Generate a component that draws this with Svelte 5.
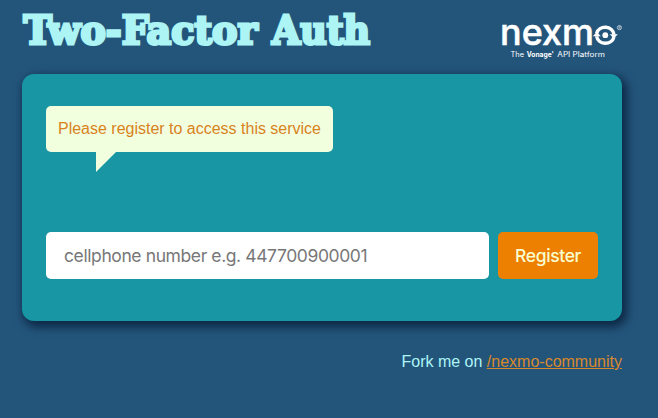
<script>
  let phone = $state('');
</script>

<main>
  <header>
    <h1>
      <svg width="356" height="60" viewBox="0 0 356 60">
        <g class="title">
          <text x="1.5" y="44" textLength="234" lengthAdjust="spacingAndGlyphs">Two-Factor</text>
          <text x="250" y="44" textLength="98" lengthAdjust="spacingAndGlyphs">Auth</text>
        </g>
      </svg>
    </h1>
    <svg class="logo" width="123" height="42" viewBox="500 20 123 42" aria-label="Nexmo">
      <g class="word">
        <text x="500" y="44.9" textLength="94" lengthAdjust="spacingAndGlyphs">nexm</text>
      </g>
      <g fill="none" stroke="#fff" stroke-width="3.4">
        <path d="M596.6 33.4 A8.9 8.4 0 0 1 614 34.6" />
        <path d="M614 37 A8.9 8.4 0 0 1 596.6 36.2" />
      </g>
      <path fill="#fff" d="M609.8 34.2 H617.8 L613.8 38.4Z M592.8 36.2 L596.8 32 L600.8 36.2Z" />
      <circle cx="605.3" cy="35.2" r="2.9" fill="#fff" />
      <circle cx="619.4" cy="27.6" r="2.1" fill="none" stroke="#fff" stroke-width=".6" />
      <text class="reg" x="618.4" y="28.8">R</text>
      <g class="tagline">
        <text x="510.5" y="56.6" textLength="13.5" lengthAdjust="spacingAndGlyphs">The</text>
        <text class="strong" x="526.8" y="56.6" textLength="27" lengthAdjust="spacingAndGlyphs">Vonage'</text>
        <text x="557.3" y="56.6" textLength="47.5" lengthAdjust="spacingAndGlyphs">API Platform</text>
      </g>
    </svg>
  </header>

  <section>
    <div class="bubble">
      <svg class="line" width="263" height="20"><text x="0" y="15" textLength="263" lengthAdjust="spacingAndGlyphs">Please register to access this service</text></svg>
    </div>
    <form onsubmit={(e) => e.preventDefault()}>
      <input type="tel" bind:value={phone} placeholder="cellphone number e.g. 447700900001" />
      <button>Register</button>
    </form>
  </section>

  <footer><span>Fork me on</span> <a href="#community">/nexmo-community</a></footer>
</main>

<style>
  :global(body) {
    margin: 0;
    background: #23557b;
  }
  main {
    box-sizing: border-box;
    width: 658px;
    height: 418px;
    padding: 0 36px 0 22px;
    overflow: hidden;
    font: 16px "Liberation Sans", Arial, sans-serif;
    color: #adf4f5;
  }
  header {
    height: 74px;
    display: flex;
    justify-content: space-between;
  }
  h1 {
    margin: 0;
  }
  svg {
    display: block;
    overflow: visible;
  }
  .title {
    font: bold 39px "DejaVu Serif", serif;
    fill: #adf4f5;
    stroke: #adf4f5;
    stroke-width: 3px;
  }
  .logo {
    margin: 20px -1px 0 0;
    fill: #fff;
  }
  .word {
    font: 500 35.5px Inter, sans-serif;
    stroke: #fff;
    stroke-width: .5px;
  }
  .reg {
    font: 3px Inter, sans-serif;
  }
  .tagline {
    font: 7px Inter, sans-serif;
  }
  .strong {
    font-weight: 700;
  }
  section {
    box-sizing: border-box;
    height: 247px;
    padding: 32px 24px 42px;
    border-radius: 12px;
    background: #1896a4;
    box-shadow: 3px 4px 10px 2px rgba(0, 15, 40, .65);
    display: flex;
    flex-direction: column;
    justify-content: space-between;
    align-items: flex-start;
  }
  .bubble {
    position: relative;
    box-sizing: border-box;
    width: 287px;
    height: 46px;
    padding: 13px 12px;
    border-radius: 5px;
    background: #f1ffdf;
  }
  .bubble::after {
    content: "";
    position: absolute;
    left: 50px;
    top: 46px;
    border-top: 20px solid #f1ffdf;
    border-right: 20px solid transparent;
  }
  .line {
    fill: #d9821c;
  }
  form {
    display: flex;
    gap: 9px;
    width: 100%;
    height: 47px;
  }
  input,
  button {
    box-sizing: border-box;
    height: 47px;
    border: 0;
    border-radius: 5px;
    font: 17.5px Inter, sans-serif;
  }
  input {
    flex: 1;
    min-width: 0;
    padding: 0 18px 1px;
    background: #fff;
    letter-spacing: -.4px;
  }
  input::placeholder {
    color: #777;
  }
  button {
    width: 100px;
    padding: 0 0 1px;
    background: #ed8000;
    color: #f8ffd0;
    font-weight: 500;
    letter-spacing: -.35px;
  }
  footer {
    margin-top: 32px;
    text-align: right;
    line-height: 18px;
  }
  a {
    color: #d9882b;
  }
</style>
